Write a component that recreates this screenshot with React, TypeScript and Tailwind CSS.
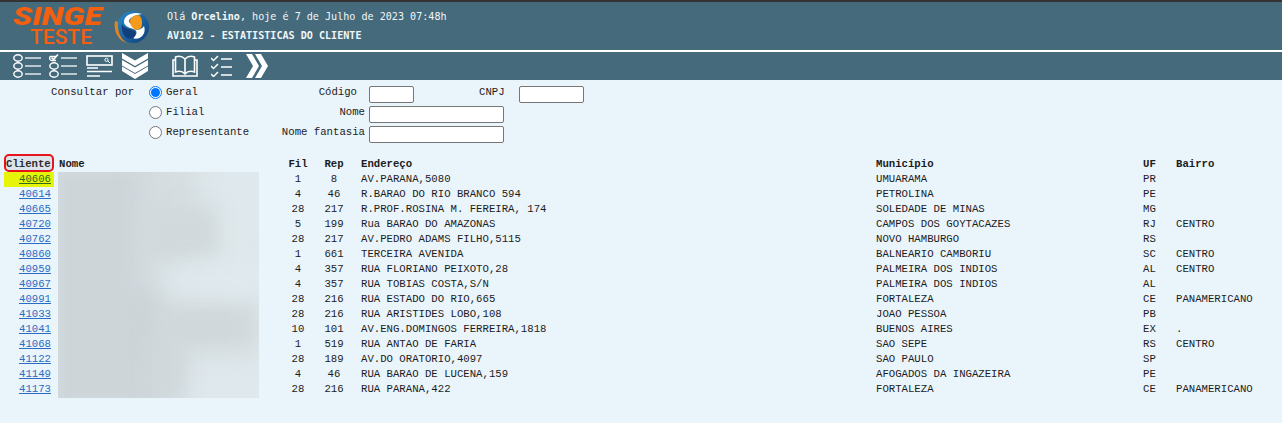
const rows = [
  ["40606", "1", "8", "AV.PARANA,5080", "UMUARAMA", "PR", ""],
  ["40614", "4", "46", "R.BARAO DO RIO BRANCO 594", "PETROLINA", "PE", ""],
  ["40665", "28", "217", "R.PROF.ROSINA M. FEREIRA, 174", "SOLEDADE DE MINAS", "MG", ""],
  ["40720", "5", "199", "Rua BARAO DO AMAZONAS", "CAMPOS DOS GOYTACAZES", "RJ", "CENTRO"],
  ["40762", "28", "217", "AV.PEDRO ADAMS FILHO,5115", "NOVO HAMBURGO", "RS", ""],
  ["40860", "1", "661", "TERCEIRA AVENIDA", "BALNEARIO CAMBORIU", "SC", "CENTRO"],
  ["40959", "4", "357", "RUA FLORIANO PEIXOTO,28", "PALMEIRA DOS INDIOS", "AL", "CENTRO"],
  ["40967", "4", "357", "RUA TOBIAS COSTA,S/N", "PALMEIRA DOS INDIOS", "AL", ""],
  ["40991", "28", "216", "RUA ESTADO DO RIO,665", "FORTALEZA", "CE", "PANAMERICANO"],
  ["41033", "28", "216", "RUA ARISTIDES LOBO,108", "JOAO PESSOA", "PB", ""],
  ["41041", "10", "101", "AV.ENG.DOMINGOS FERREIRA,1818", "BUENOS AIRES", "EX", "."],
  ["41068", "1", "519", "RUA ANTAO DE FARIA", "SAO SEPE", "RS", "CENTRO"],
  ["41122", "28", "189", "AV.DO ORATORIO,4097", "SAO PAULO", "SP", ""],
  ["41149", "4", "46", "RUA BARAO DE LUCENA,159", "AFOGADOS DA INGAZEIRA", "PE", ""],
  ["41173", "28", "216", "RUA PARANA,422", "FORTALEZA", "CE", "PANAMERICANO"],
];

const cols = "grid grid-cols-[53px_227px_26px_46px_519px_267px_33px_1fr] h-[15px] items-center";

function ListIcon({ check }: { check?: boolean }) {
  return (
    <svg width="28" height="24" viewBox="0 0 28 24" fill="none" stroke="white" strokeWidth="1.4">
      {check ? (
        <>
          <path d="M1 2.5h6M1 2.5c-1 2 0 4 2 4h4" />
          <path d="M2.5 3.5l2 2L9 .5" strokeWidth="1.6" />
        </>
      ) : (
        <ellipse cx="5" cy="4" rx="4.2" ry="3.2" />
      )}
      <ellipse cx="5" cy="12" rx="4.2" ry="3.2" />
      <ellipse cx="5" cy="20" rx="4.2" ry="3.2" />
      <path d="M12 4h16M12 12h16M12 20h16" stroke="#dfe7ea" />
    </svg>
  );
}

function FormIcon() {
  return (
    <svg width="27" height="23" viewBox="0 0 27 23" fill="none" stroke="white">
      <rect x="1" y="1" width="25" height="9" strokeWidth="1.6" />
      <circle cx="20.5" cy="4.8" r="1.6" />
      <path d="M22 6l2 2" />
      <path d="M1 13h11M1 16.5h25M1 21h13" strokeWidth="1.7" />
    </svg>
  );
}

function DoubleDown() {
  return (
    <svg width="26" height="26" viewBox="0 0 26 26" fill="white">
      <path d="M0 0l13 7.5L26 0v5.5L13 13 0 5.5z" />
      <path d="M0 7l13 7.5L26 7v5.5L13 20 0 12.5z" />
      <path d="M0 13.5l13 7.5 13-7.5V18l-13 8-13-8z" />
    </svg>
  );
}

function BookIcon() {
  return (
    <svg width="26" height="22" viewBox="0 0 26 22" fill="none" stroke="white" strokeWidth="1.6">
      <path d="M13 4C10 1 6 1 3.500 2v15c3-1 7-1 9.500 2 2.500-3 6.500-3 9.500-2V2C20 1 16 1 13 4zM13 4v15" />
      <path d="M3.500 5H1v16h24V5h-2.500" />
    </svg>
  );
}

function TaskIcon() {
  return (
    <svg width="21" height="22" viewBox="0 0 21 22" fill="none" stroke="white" strokeWidth="1.5">
      <path d="M0 3l2.500 2.500L7 1M0 11l2.500 2.500L7 9M0 19l2.500 2.500L7 17" />
      <path d="M10 4h11M10 12h11M10 20h11" />
    </svg>
  );
}

function NextIcon() {
  return (
    <svg width="22" height="24" viewBox="0 0 22 24" fill="white">
      <path d="M0 0h6l7 12-7 12H0l7-12z" />
      <path d="M9 0h6l7 12-7 12H9l7-12z" />
    </svg>
  );
}

function Radio({ on, label }: { on?: boolean; label: string }) {
  return (
    <div className="flex items-center gap-[4px] h-[20px]">
      {on ? (
        <span className="w-[13px] h-[13px] rounded-full border border-[#0075ff] bg-white flex items-center justify-center">
          <span className="w-[9px] h-[9px] rounded-full bg-[#0075ff]" />
        </span>
      ) : (
        <span className="w-[13px] h-[13px] rounded-full border border-[#767676] bg-white" />
      )}
      <span>{label}</span>
    </div>
  );
}

function Field({ w }: { w: string }) {
  return <input className={`${w} h-[17px] bg-white border border-[#767676] rounded-[2px]`} />;
}

export default function App() {
  return (
    <div className="w-[1282px] h-[423px] overflow-hidden bg-[#eaf4fb] text-[10.67px] text-[#1c1c1c] font-['Liberation_Mono',monospace]">
      <div className="h-[52px] bg-[#456a7c] border-t-2 border-[#333] border-b-2 border-b-white flex items-center">
        <div className="w-[113px] flex flex-col items-center font-['Roboto',sans-serif] text-[#f4600f] leading-none">
          <span className="text-[25px] font-black italic leading-[20px] scale-x-[1.28] origin-center ml-[3px]">SINGE</span>
          <span className="text-[21px] font-medium leading-[17px] ml-[9px] mt-[2px]">TESTE</span>
        </div>
        <svg width="40" height="34" viewBox="0 0 40 34" className="mt-[1px]">
          <defs>
            <linearGradient id="ball" x1="0" y1="0" x2="1" y2="1">
              <stop offset="0" stopColor="#2a8ccb" />
              <stop offset="1" stopColor="#0c3f78" />
            </linearGradient>
          </defs>
          <circle cx="20" cy="17" r="16" fill="url(#ball)" />
          <path d="M29 4C20 1 11 5 11 12c0 5 8 6 11 8-1-5-6-6-6-9 0-3 6-6 13-7z" fill="#fff" />
          <path d="M17 11c0-3 4-6 9-6 3 3 4 8 2 13-1 1-3 2-6 2-3-3-5-5-5-9z" fill="#f59a1a" />
          <path d="M22 20c3 2 1 6-2 8 3 2 8 0 10-3 2-3 2-6 1-9-3 4-6 4-9 4z" fill="#fff" />
          <path d="M2 11C0 20 5 31 14 33 7 29 4 20 5 12z" fill="#e8821e" />
          <path d="M9 14c-1 6 1 11 5 14 3 1 6 1 7-1 2-2 2-5 0-6-3-2-10-2-12-7z" fill="#123f7c" />
        </svg>
        <div className="ml-[14px] text-[#f2f6f8] font-['DejaVu_Sans_Mono',monospace] text-[10.1px] leading-[19px]">
          <div>Olá <b>Orcelino</b>, hoje é 7 de Julho de 2023 07:48h</div>
          <div className="font-bold">AV1012 - ESTATISTICAS DO CLIENTE</div>
        </div>
      </div>

      <div className="h-[28px] bg-[#456a7c] flex items-center pl-[13px]">
        <ListIcon />
        <div className="ml-[8px]"><ListIcon check /></div>
        <div className="ml-[9px]"><FormIcon /></div>
        <div className="ml-[9px]"><DoubleDown /></div>
        <div className="ml-[24px]"><BookIcon /></div>
        <div className="ml-[13px]"><TaskIcon /></div>
        <div className="ml-[14px]"><NextIcon /></div>
      </div>

      <div className="flex pt-[2px] h-[76px]">
        <div className="w-[149px] pl-[51px] h-[20px] flex items-center">Consultar por</div>
        <div className="w-[132px]">
          <Radio on label="Geral" />
          <Radio label="Filial" />
          <Radio label="Representante" />
        </div>
        <div className="w-[84px] text-right">
          <div className="h-[20px] flex items-center justify-end pr-[8px]">Código</div>
          <div className="h-[20px] flex items-center justify-end">Nome</div>
          <div className="h-[20px] flex items-center justify-end">Nome fantasia</div>
        </div>
        <div className="ml-[4px]">
          <div className="h-[20px] flex items-center pt-[5px]">
            <Field w="w-[45px]" />
            <span className="ml-[65px] -mt-[5px]">CNPJ</span>
            <div className="ml-[14px]"><Field w="w-[65px]" /></div>
          </div>
          <div className="h-[20px] flex items-center pt-[5px]"><Field w="w-[135px]" /></div>
          <div className="h-[20px] flex items-center pt-[5px]"><Field w="w-[135px]" /></div>
        </div>
      </div>

      <div className="pl-[5px] relative">
        <div className={`${cols} font-bold`}>
          <div className="relative pl-[1px]">
            Cliente
            <span className="absolute -left-[1px] -top-[2px] w-[50px] h-[18px] rounded-[5px] border-2 border-[#e8141c] bg-[#88888822]" />
          </div>
          <div className="pl-[1px]">Nome</div>
          <div className="text-center">Fil</div>
          <div className="text-center">Rep</div>
          <div className="pl-[4px]">Endereço</div>
          <div>Município</div>
          <div>UF</div>
          <div>Bairro</div>
        </div>
        {rows.map((r, i) => (
          <div key={r[0]} className={cols}>
            <div className={`w-[50px] -ml-[1px] h-[15px] leading-[15px] text-right pr-[3px] ${i === 0 ? "bg-[#e6f507]" : ""}`}>
              <a href="#" className={`underline ${i === 0 ? "text-[#2f6b1e]" : "text-[#2b6cc4]"}`}>{r[0]}</a>
            </div>
            <div />
            <div className="text-center">{r[1]}</div>
            <div className="text-center">{r[2]}</div>
            <div className="pl-[4px]">{r[3]}</div>
            <div>{r[4]}</div>
            <div>{r[5]}</div>
            <div>{r[6]}</div>
          </div>
        ))}
        {/* blurred-out customer names */}
        <div className="absolute left-[58px] top-[16px] w-[201px] h-[226px] overflow-hidden bg-[#dfe8ec]">
          <div className="absolute left-[-10px] top-[-10px] w-[120px] h-[250px] bg-[#cdd5d9] blur-[10px]" />
          <div className="absolute left-[80px] top-[-10px] w-[60px] h-[130px] bg-[#d5dde1] blur-[12px]" />
          <div className="absolute left-[90px] top-[35px] w-[70px] h-[50px] bg-[#d1d9dc] blur-[10px]" />
          <div className="absolute left-[100px] top-[130px] w-[100px] h-[50px] bg-[#d0d7da] blur-[12px]" />
          <div className="absolute left-[90px] top-[170px] w-[40px] h-[60px] bg-[#d0d8dc] blur-[10px]" />
          <div className="absolute left-[105px] top-[95px] w-[100px] h-[24px] bg-[#e1ebef] blur-[12px]" />
        </div>
      </div>
    </div>
  );
}
